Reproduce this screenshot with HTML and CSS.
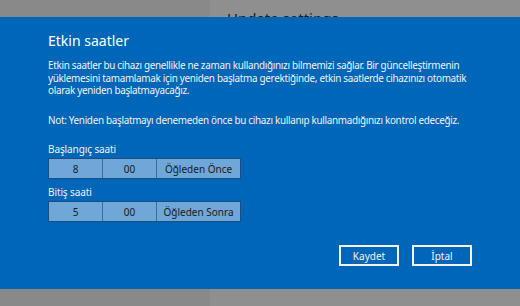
FILE: index.html
```html
<!DOCTYPE html>
<html lang="tr">
<head>
<meta charset="UTF-8">
<meta name="viewport" content="width=device-width, initial-scale=1.0">
<title>Etkin saatler</title>
<link rel="stylesheet" href="styles.css">
</head>
<body>
<div class="backdrop">
    <div class="side"></div>
    <div class="main">
        <h1 class="page-title">Update settings</h1>
    </div>
</div>

<div class="dialog">
    <h2 class="dialog-title">Etkin saatler</h2>
    <p class="text">Etkin saatler bu cihazı genellikle ne zaman kullandığınızı bilmemizi sağlar. Bir güncelleştirmenin yüklemesini tamamlamak için yeniden başlatma gerektiğinde, etkin saatlerde cihazınızı otomatik olarak yeniden başlatmayacağız.</p>
    <p class="text note">Not: Yeniden başlatmayı denemeden önce bu cihazı kullanıp kullanmadığınızı kontrol edeceğiz.</p>

    <div class="field">
        <div class="label">Başlangıç saati</div>
        <div class="picker">
            <span class="cell hour">8</span>
            <span class="cell minute">00</span>
            <span class="cell period">Öğleden Önce</span>
        </div>
    </div>
    <div class="field">
        <div class="label">Bitiş saati</div>
        <div class="picker">
            <span class="cell hour">5</span>
            <span class="cell minute">00</span>
            <span class="cell period">Öğleden Sonra</span>
        </div>
    </div>

    <div class="buttons">
        <button class="btn">Kaydet</button>
        <button class="btn">İptal</button>
    </div>
</div>
</body>
</html>
```

FILE: styles.css
```css
/* Etkin saatler penceresi */
body {
    margin: 0;
    font-family: "Noto Sans", "Open Sans", sans-serif;
    background-color: #8f8f8f;
    overflow: hidden;
}
.backdrop {
    display: flex;
    height: 306px;
}
.side {
    width: 210px;
    background-color: #898989;
}
.main {
    flex: 1;
    padding-left: 17px;
}
.page-title {
    margin: 0;
    padding-top: 8px;
    font-size: 15px;
    font-weight: normal;
    color: #1a1a1a;
}
.dialog {
    position: absolute;
    top: 17px;
    left: 0;
    width: 520px;
    height: 272px;
    box-sizing: border-box;
    padding: 13px 48px 0 48px;
    background-color: #0067b8;
    color: #f2f2f2;
}
.dialog-title {
    margin: 0 0 7px 0;
    font-size: 14px;
    font-weight: normal;
    line-height: 22px;
    color: #ffffff;
}
.text {
    margin: 0 0 17.5px 0;
    font-size: 9.9px;
    line-height: 12.5px;
    letter-spacing: -0.3px;
}
.note {
    margin-bottom: 16.5px;
}
.field {
    margin-bottom: 7px;
}
.label {
    font-size: 10px;
    line-height: 13px;
    margin-bottom: 2px;
    letter-spacing: -0.1px;
}
.picker {
    display: flex;
    width: 193px;
    height: 21px;
    box-sizing: border-box;
    border: 1px solid #1c4d80;
    background-color: #6fa7d8;
    color: #1a1a1a;
    font-size: 10px;
}
.cell {
    display: flex;
    align-items: center;
    justify-content: center;
    border-right: 1px solid #3a6e9f;
}
.hour, .minute {
    width: 53px;
}
.period {
    flex: 1;
    border-right: none;
}
.buttons {
    display: flex;
    justify-content: flex-end;
    gap: 13px;
    margin-top: 23px;
}
.btn {
    width: 60px;
    height: 21px;
    padding: 0;
    background-color: transparent;
    border: 2px solid #f2f2f2;
    color: #f2f2f2;
    font-family: inherit;
    font-size: 10px;
}
```
